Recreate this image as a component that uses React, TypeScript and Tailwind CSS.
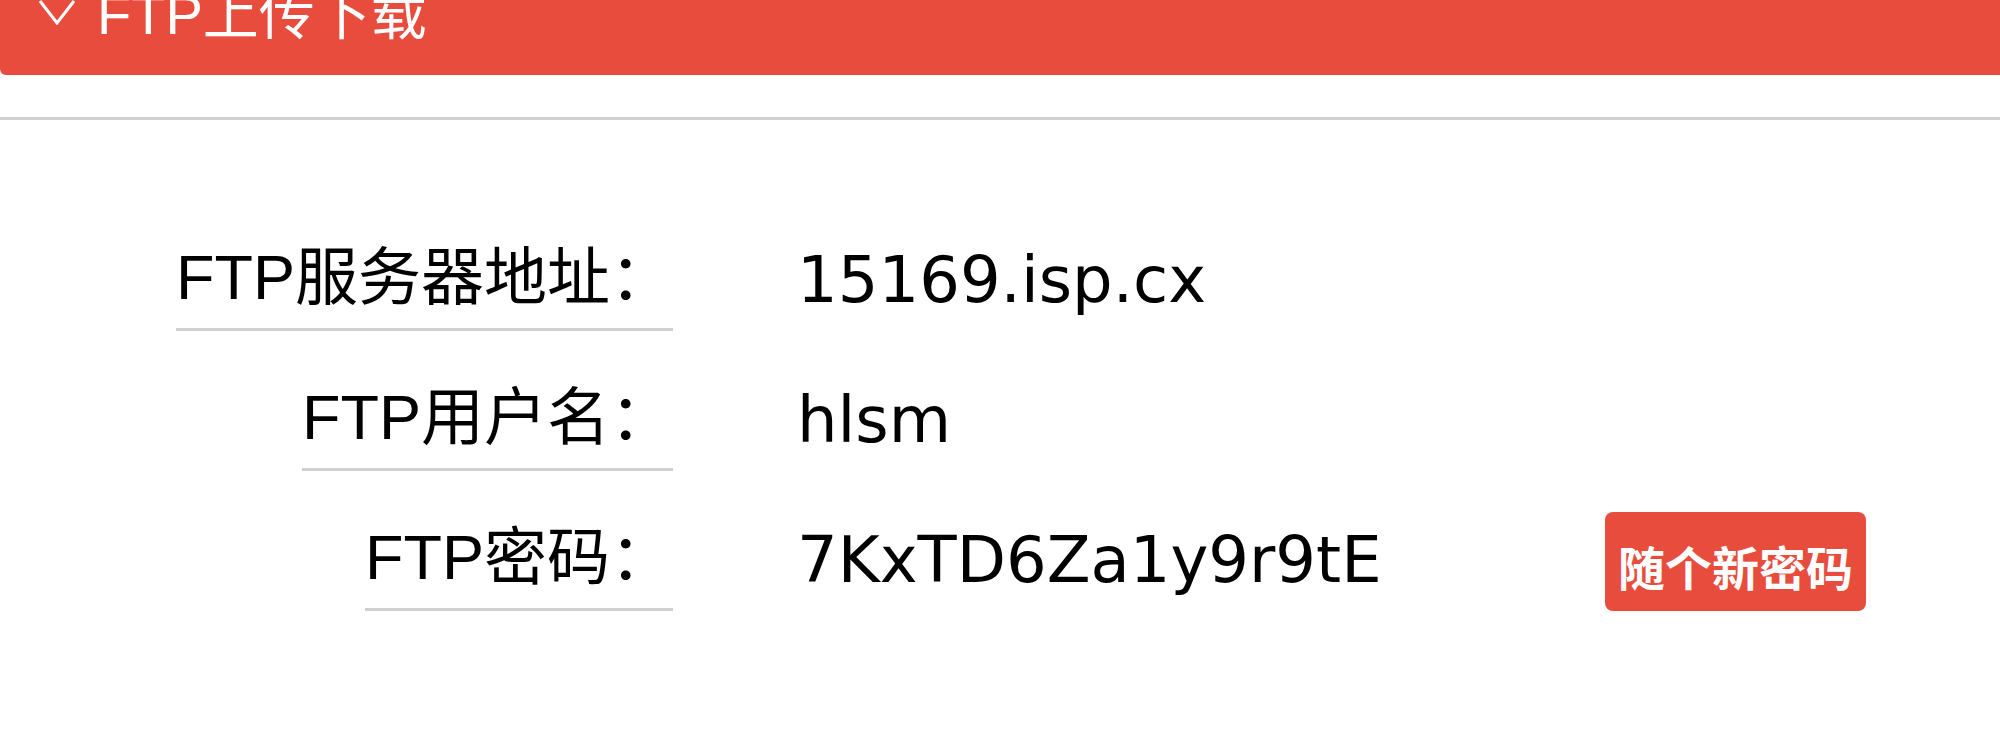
import React from 'react';

const rows = [
    { label: 'FTP服务器地址：', value: '15169.isp.cx' },
    { label: 'FTP用户名：', value: 'hlsm' },
    { label: 'FTP密码：', value: '7KxTD6Za1y9r9tE', action: '随个新密码' },
];

export default function App() {
    return (
        <div className="w-[2000px] h-[744px] bg-white overflow-hidden">
            {/* section header */}
            <div className="h-[75px] bg-[#e84c3d] rounded-bl-[6px] overflow-hidden">
                <div className="flex items-start -mt-[13px] ml-[37px] gap-[20px] text-white font-['Liberation_Sans','Noto_Sans_CJK_SC',sans-serif] text-[56px] leading-[56px]">
                    <svg width="40" height="40" viewBox="0 0 40 40" fill="none" stroke="currentColor" strokeWidth="3" strokeLinejoin="miter" className="-mt-[2px]">
                        <polyline points="3,16 20,38 37,16" />
                    </svg>
                    <span>FTP上传下载</span>
                </div>
            </div>

            <div className="mt-[42px] border-t-[3px] border-[#d0d0d0] pt-[71px]">
                {rows.map((row) => (
                    <div key={row.label} className="h-[140px] flex items-end">
                        <div className="w-[673px] flex justify-end">
                            <span className="inline-block border-b-[3px] border-[#d0d0d0] pb-[19px] text-black text-[63px] leading-[63px] font-['Liberation_Sans','Noto_Sans_CJK_SC',sans-serif] whitespace-nowrap">
                                {row.label}
                            </span>
                        </div>
                        <div className="ml-[124px] w-[808px] pb-[19px] text-black text-[64px] leading-[64px] font-['DejaVu_Sans',sans-serif] whitespace-nowrap">
                            {row.value}
                        </div>
                        {row.action && (
                            <button className="bg-[#e84c3d] text-white rounded-[8px] px-[13px] pt-[30px] pb-[22px] text-[47px] leading-[47px] font-bold font-['Noto_Sans_CJK_SC',sans-serif] whitespace-nowrap">
                                {row.action}
                            </button>
                        )}
                    </div>
                ))}
            </div>
        </div>
    );
}
